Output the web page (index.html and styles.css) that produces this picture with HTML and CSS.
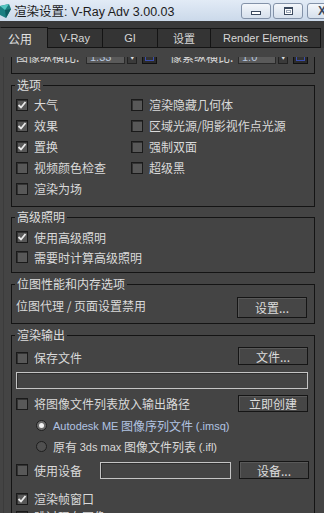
FILE: index.html
```html
<!DOCTYPE html>
<html>
<head>
<meta charset="utf-8">
<link rel="stylesheet" href="styles.css">
</head>
<body>
<div class="titlebar">
  <svg class="appicon" width="11" height="14" viewBox="0 0 11 14"><path d="M0 2 L9 0 L11 5 L6 14 L0 11 Z" fill="#1b7f82"/><path d="M0 2 L9 0 L5 6 Z" fill="#53c6c2"/><path d="M5 6 L11 5 L6 14 Z" fill="#0f5d62"/></svg>
  <span class="title">渲染设置: V-Ray Adv 3.00.03</span>
  <div class="winbtns">
    <div class="wbtn wmin"><span class="g-min"></span></div>
    <div class="wbtn wmax"><span class="g-max"></span></div>
    <div class="wbtn wclose"><span class="g-x">X</span></div>
  </div>
</div>
<div class="tabs">
  <div class="tab active">公用</div>
  <div class="tab w56">V-Ray</div>
  <div class="tab w56">GI</div>
  <div class="tab w54">设置</div>
  <div class="tab w111">Render Elements</div>
</div>
<div class="page">
  <div class="viewport">
    <div class="partial">
      <div class="ratio-row">
        <span class="rlabel">图像纵横比:</span>
        <span class="spin s1">1.33</span>
        <span class="arrow">▼</span>
        <span class="lock"></span>
        <span class="rlabel r2">像素纵横比:</span>
        <span class="spin s2">1.0</span>
        <span class="arrow">▼</span>
        <span class="lock"></span>
      </div>
    </div>

    <fieldset class="grp">
      <legend>选项</legend>
      <div class="grid2">
        <label class="ck"><span class="cb"><svg viewBox="0 0 10 10" width="10" height="10"><path d="M1.5 5 L4 7.5 L8.5 2" fill="none" stroke="#ececec" stroke-width="1.8"/></svg></span>大气</label>
        <label class="ck"><span class="cb"></span>渲染隐藏几何体</label>
        <label class="ck"><span class="cb"><svg viewBox="0 0 10 10" width="10" height="10"><path d="M1.5 5 L4 7.5 L8.5 2" fill="none" stroke="#ececec" stroke-width="1.8"/></svg></span>效果</label>
        <label class="ck"><span class="cb"></span>区域光源/阴影视作点光源</label>
        <label class="ck"><span class="cb"><svg viewBox="0 0 10 10" width="10" height="10"><path d="M1.5 5 L4 7.5 L8.5 2" fill="none" stroke="#ececec" stroke-width="1.8"/></svg></span>置换</label>
        <label class="ck"><span class="cb"></span>强制双面</label>
        <label class="ck"><span class="cb"></span>视频颜色检查</label>
        <label class="ck"><span class="cb"></span>超级黑</label>
        <label class="ck"><span class="cb"></span>渲染为场</label>
      </div>
    </fieldset>

    <fieldset class="grp g-adv">
      <legend>高级照明</legend>
      <div class="rows20">
        <label class="ck"><span class="cb"><svg viewBox="0 0 10 10" width="10" height="10"><path d="M1.5 5 L4 7.5 L8.5 2" fill="none" stroke="#ececec" stroke-width="1.8"/></svg></span>使用高级照明</label>
        <label class="ck"><span class="cb"></span>需要时计算高级照明</label>
      </div>
    </fieldset>

    <fieldset class="grp">
      <legend>位图性能和内存选项</legend>
      <div class="bm-row">
        <span class="bm-text">位图代理 / 页面设置禁用</span>
        <span class="btn b-set">设置...</span>
      </div>
    </fieldset>

    <fieldset class="grp g-out">
      <legend>渲染输出</legend>
      <div class="out">
        <div class="orow r1">
          <label class="ck"><span class="cb"></span>保存文件</label>
          <span class="btn b-file">文件...</span>
        </div>
        <div class="field f-path"></div>
        <div class="orow r3">
          <label class="ck"><span class="cb"></span>将图像文件列表放入输出路径</label>
          <span class="btn b-now">立即创建</span>
        </div>
        <label class="rrow blue"><span class="rb on"></span><span class="lat">Autodesk ME</span>&nbsp;图像序列文件&nbsp;<span class="lat">(.imsq)</span></label>
        <label class="rrow"><span class="rb"></span>原有&nbsp;<span class="lat">3ds max</span>&nbsp;图像文件列表&nbsp;<span class="lat">(.ifl)</span></label>
        <div class="orow r5">
          <label class="ck"><span class="cb"></span>使用设备</label>
          <div class="field f-dev"></div>
          <span class="btn b-dev">设备...</span>
        </div>
        <label class="ck crow"><span class="cb"><svg viewBox="0 0 10 10" width="10" height="10"><path d="M1.5 5 L4 7.5 L8.5 2" fill="none" stroke="#ececec" stroke-width="1.8"/></svg></span>渲染帧窗口</label>
        <label class="ck crow last"><span class="cb dark"></span>跳过现有图像</label>
      </div>
    </fieldset>
  </div>
</div>
</body>
</html>
```

FILE: styles.css
```css
* { box-sizing: border-box; }
html, body { margin: 0; padding: 0; }
body {
  width: 324px;
  height: 513px;
  overflow: hidden;
  background: #444444;
  font-family: "Noto Sans CJK SC", "Liberation Sans", sans-serif;
  font-size: 12px;
  color: #dadada;
}

/* title bar */
.titlebar {
  height: 21px;
  display: flex;
  align-items: center;
  background: linear-gradient(#e2ebf6, #cbd9ea);
  color: #1b1b1b;
  overflow: hidden;
}
.appicon { flex: none; margin-right: 3px; }
.title {
  font-family: "Liberation Sans", "Noto Sans CJK SC", sans-serif;
  font-size: 12.5px;
  white-space: nowrap;
}
.winbtns {
  display: flex;
  align-self: flex-start;
  margin-top: 3px;
  margin-left: auto;
  margin-right: -13px;
  gap: 2px;
  flex: none;
}
.wbtn {
  height: 16px;
  width: 30px;
  border: 1px solid #8392a8;
  border-radius: 3px;
  background: linear-gradient(#f4f7fb, #d6e0ec);
  display: flex;
  justify-content: center;
  align-items: center;
}
.wclose { margin-left: 2px; }
.wmin { align-items: flex-end; padding-bottom: 3px; }
.g-min {
  width: 10px; height: 4px;
  background: #fff;
  border: 1px solid #3c4a5e;
}
.g-max {
  width: 9px; height: 8px;
  background: #fff;
  border: 1px solid #3c4a5e;
  border-top-width: 2px;
  box-shadow: inset 0 0 0 1px #fff, inset 0 0 0 2px #9aa6b6;
}
.g-x {
  font-family: "Liberation Sans", sans-serif;
  font-weight: bold;
  font-size: 12px;
  color: #3c4a5e;
  line-height: 12px;
}

/* tabs */
.tabs {
  height: 27px;
  display: flex;
  align-items: flex-end;
  background: #393939;
}
.tab {
  height: 20px;
  border: 1px solid #141414;
  margin-left: -1px;
  background: #343434;
  display: flex;
  align-items: center;
  justify-content: center;
  font-family: "Liberation Sans", "Noto Sans CJK SC", sans-serif;
  font-size: 11px;
  color: #d6d6d6;
  flex: none;
}
.tab.active {
  margin-left: 0;
  width: 48px;
  height: 21px;
  background: #444444;
  border-bottom: none;
  border-left-color: #444444;
  padding-right: 8px;
  font-size: 12px;
  color: #e2e2e2;
}
.w56 { width: 56px; }
.w54 { width: 54px; }
.w111 { width: 111px; }

/* page */
.page {
  height: 465px;
  padding-top: 9px;
}
.viewport {
  height: 456px;
  overflow: hidden;
  margin-left: 3px;
  border-left: 1px solid #3b3b3b;
}

.partial {
  border: 1px solid #141414;
  margin: -10px 9px 0 7px;
  padding: 0 6px 9px 4px;
}
.ratio-row {
  height: 16px;
  display: flex;
  align-items: center;
}
.rlabel { width: 70px; white-space: nowrap; flex: none; }
.rlabel.r2 { width: 68px; margin-left: 13px; }
.spin {
  height: 15px;
  width: 40px;
  background: #5a5a5a;
  color: #b8c8e0;
  font-family: "Liberation Sans", sans-serif;
  font-size: 11px;
  line-height: 15px;
  padding-left: 3px;
  border: 1px solid #2a2a2a;
}
.spin.s2 { width: 39px; }
.arrow {
  width: 10px; height: 15px;
  margin-left: 2px;
  background: #3a3a3a;
  border: 1px solid #222;
  color: #e0e0e0;
  font-size: 7px;
  line-height: 13px;
  text-align: center;
}
.lock {
  width: 15px; height: 15px;
  margin-left: 5px;
  background: #333;
  border: 1px solid #111;
  box-shadow: inset 0 0 0 2px #2b2b2b, inset 0 0 0 3px #3b4fb0;
}

/* group boxes */
.grp {
  border: 1px solid #141414;
  margin: 4px 9px 0 7px;
  padding: 0 6px 0 4px;
  min-width: 0;
}
.grp legend {
  padding: 0 2px;
  margin-left: -1px;
  line-height: 14px;
  font-size: 12px;
  color: #dedede;
}
.g-adv { margin-top: 3px; }

.ck {
  display: flex;
  align-items: center;
  gap: 6px;
  white-space: nowrap;
}
.cb {
  width: 12px;
  height: 12px;
  flex: none;
  border: 1px solid #1a1a1a;
  background: #585858;
  box-shadow: inset 1px 1px 0 #333;
  display: flex;
  align-items: center;
  justify-content: center;
}
.cb svg { display: block; }
.cb.dark { background: #222; }

.grid2 {
  display: grid;
  grid-template-columns: 115px 1fr;
  grid-auto-rows: 21px;
  padding: 2px 0 7px;
}
.rows20 { padding: 3px 0 5px; }
.rows20 .ck { height: 20px; }

.btn {
  display: flex;
  align-items: center;
  justify-content: center;
  background: #464646;
  border: 1px solid #151515;
  box-shadow: inset 1px 1px 0 #595959;
  color: #dcdcdc;
  white-space: nowrap;
  flex: none;
}
.bm-row {
  display: flex;
  align-items: center;
  height: 21px;
  margin: 6px 0 5px;
}
.bm-text { margin-bottom: 4px; white-space: nowrap; }
.b-set { margin-left: auto; margin-right: 1px; width: 70px; height: 21px; }

.out { padding-top: 5px; height: 200px; }
.orow { display: flex; align-items: center; }
.r1 { height: 18px; }
.r1 .ck { margin-top: 3px; }
.b-file { margin-left: auto; width: 70px; height: 18px; }
.field {
  border: 1px solid #c4c4c4;
  background: #444;
  box-shadow: inset 1px 1px 0 #2e2e2e;
}
.f-path { height: 17px; margin-top: 7px; }
.r3 { height: 17px; margin-top: 6px; }
.b-now { margin-left: auto; width: 70px; height: 17px; }
.rrow {
  display: flex;
  align-items: center;
  height: 21px;
  padding-left: 20px;
  white-space: nowrap;
}
.r3 + .rrow { margin-top: 3px; }
.rrow.blue { color: #b1c3e2; }
.rb {
  width: 11px; height: 11px;
  border-radius: 50%;
  background: #505050;
  border: 1px solid #1e1e1e;
  margin-right: 6px;
  flex: none;
  display: flex;
  align-items: center;
  justify-content: center;
}
.rb.on { background: #6a6a6a; }
.rb.on::after {
  content: "";
  width: 5px; height: 5px;
  border-radius: 50%;
  background: #f2f2f2;
}
.lat { font-family: "Liberation Sans", sans-serif; font-size: 11px; }
.r5 { height: 18px; margin-top: 4px; }
.f-dev { width: 131px; height: 17px; margin-left: 18px; }
.b-dev { margin-left: auto; margin-right: -1px; width: 70px; height: 18px; }
.crow { height: 21px; }
.r5 + .crow { margin-top: 9px; }
.crow.last { margin-top: -3px; }
```
